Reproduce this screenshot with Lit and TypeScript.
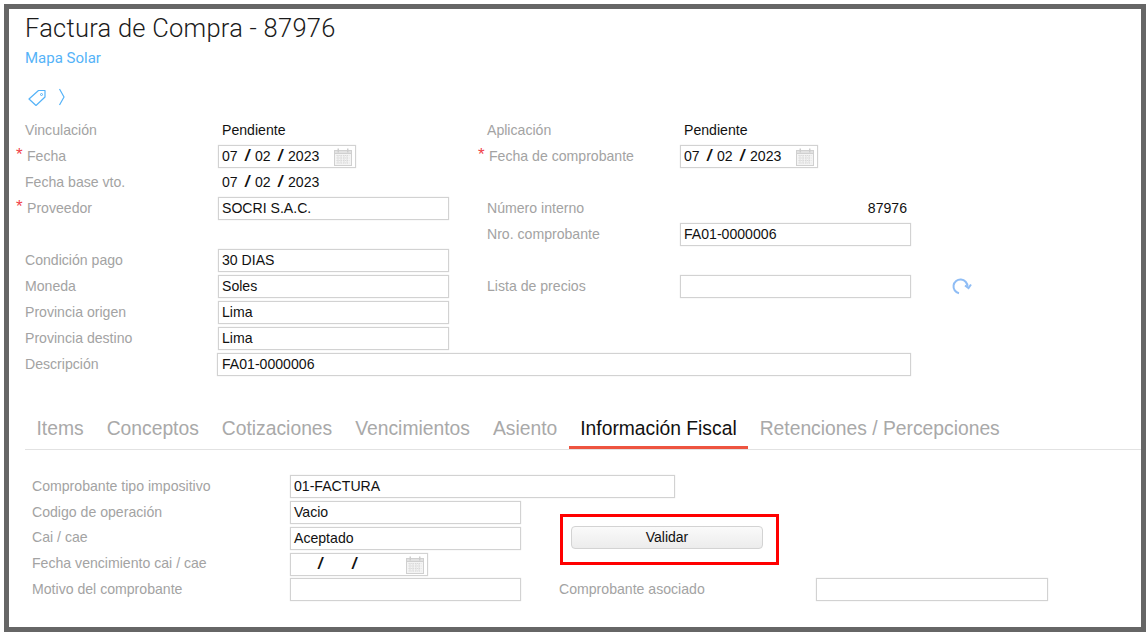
import { LitElement, html, css, svg } from "lit";
import { customElement } from "lit/decorators.js";

const calendar = html`<svg class="cal" width="18" height="18" viewBox="0 0 18 18" fill="none">
  <rect x="0.5" y="2.5" width="17" height="15" fill="#f4f4f4" stroke="#d0d0d0"/>
  <rect x="0.5" y="2.5" width="17" height="3" fill="#e2e2e2" stroke="#d0d0d0"/>
  <rect x="3.5" y="0.5" width="1.5" height="4" fill="#cdcdcd"/><rect x="13" y="0.5" width="1.5" height="4" fill="#cdcdcd"/>
  ${[7.5, 10, 12.5, 15].map((y) => svg`<path d="M2.5 ${y}H15.5" stroke="#d9d9d9" stroke-width="1" stroke-dasharray="1.2 .9"/>`)}
  ${[4, 7, 10, 13].map((x) => svg`<path d="M${x} 7V15.5" stroke="#d9d9d9" stroke-width=".8"/>`)}
</svg>`;

const dateText = (d = "07", m = "02", y = "2023") => html`<span class="dp">${d}</span><i class="sl">/</i><span class="dp">${m}</span><i class="sl">/</i><span>${y}</span>`;

@customElement("app-root")
export class AppRoot extends LitElement {
  static styles = css`
    :host { display: block; width: 1147px; height: 635px; box-sizing: border-box; padding: 4px 1px 3px 4px; background: #fff; font-family: "Liberation Sans", Arial, sans-serif; overflow: hidden; }
    .frame { height: 100%; box-sizing: border-box; border: 5px solid #666; background: #fff; padding: 4px 0 0 16px; overflow: hidden; }
    h1 { margin: 0; font: 300 25.5px/30px Roboto, sans-serif; color: #1b1b1b; letter-spacing: 0.25px; }
    .link { margin-top: 5px; font: 400 15px/20px Roboto, sans-serif; color: #55b3f8; }
    .tools { display: flex; align-items: center; gap: 11px; height: 22px; margin: 18px 0 9px 2px; }
    .form { display: grid; grid-template-columns: 193px 269px 193px 231px 70px; grid-auto-rows: 26px; align-items: center; font-size: 14px; color: #111; }
    .lab { color: #a3a3a3; white-space: nowrap; position: relative; font-size: 14.1px; }
    .req { padding-left: 2px; }
    .req::before { content: "*"; position: absolute; left: -9px; top: -3px; color: #f0414a; font-size: 17px; line-height: 20px; }
    .val { padding-left: 4px; white-space: nowrap; font-size: 14.1px; }
    .box { box-sizing: border-box; height: 23px; border: 1px solid #d2d2d2; box-shadow: 0 0 1px rgba(0, 0, 0, 0.15); padding: 0 3px; line-height: 21px; display: flex; align-items: center; white-space: nowrap; background: #fff; color: #111; font-size: 14.1px; }
    .w231 { width: 231px; }
    .w232 { width: 232px; }
    .date { width: 138px; position: relative; }
    .plain { display: flex; align-items: center; }
    .dp { display: inline-block; width: 17px; }
    .sl { display: inline-block; width: 16px; padding-left: 6px; box-sizing: border-box; font-style: italic; font-size: 16px; font-weight: 700; line-height: 16px; }
    .blank { display: inline-block; width: 18px; }
    .cal { position: absolute; right: 3px; top: 2px; }
    .wide { grid-column: 2 / 5; width: 694px; margin-left: -1px; padding-left: 4px; }
    .right { text-align: right; padding-right: 4px; }
    .refresh { padding-left: 39px; display: flex; }
    .refresh svg { flex: none; }
    .tabs { display: flex; margin: 34px 0 0 0; width: 1116px; height: 38px; border-bottom: 1px solid #e2e2e2; box-sizing: content-box; }
    .tab { padding: 0 11.5px; font-size: 19.3px; line-height: 36px; color: #a9a9a9; box-sizing: border-box; height: 38px; white-space: nowrap; }
    .tab.on { color: #111; border-bottom: 3px solid #ee5440; }
    .lower { display: grid; grid-template-columns: 258px 269px 257px 232px; grid-auto-rows: 25.75px; align-items: center; margin: 23px 0 0 7px; font-size: 14px; }
    .f { padding-top: 2px; }
    .c2 { grid-column: 2 / 4; }
    .w385 { width: 385px; }
    .btnwrap { position: relative; margin-left: 12px; width: 192px; height: 23px; }
    button { width: 100%; height: 100%; box-sizing: border-box; border: 1px solid #d3d3d3; border-radius: 4px; background: linear-gradient(#fafafa, #ececec); font: 14px "Liberation Sans", Arial, sans-serif; color: #111; padding: 0; display: block; }
    .mark { position: absolute; left: -11px; top: -12px; width: 219px; height: 51px; box-sizing: border-box; border: 3px solid #f00; pointer-events: none; }
  `;

  render() {
    return html`<div class="frame">
      <h1>Factura de Compra - 87976</h1>
      <div class="link">Mapa Solar</div>
      <div class="tools">
        <svg width="20" height="18" viewBox="0 0 20 18" fill="none" stroke="#55b3f8" stroke-width="1.2" stroke-linejoin="round"><path d="M2 11 11.5 2.5H18V9L9 17.5Z"/><circle cx="14.5" cy="6.5" r="1" stroke-width="1"/></svg>
        <svg width="8" height="18" viewBox="0 0 8 18" fill="none" stroke="#55b3f8" stroke-width="1.2"><path d="M1.5 1 6 9 1.5 17"/></svg>
      </div>
      <div class="form">
        <div class="lab">Vinculación</div><div class="val">Pendiente</div><div class="lab">Aplicación</div><div class="val">Pendiente</div><div></div>
        <div class="lab req">Fecha</div><div class="box date">${dateText()}${calendar}</div><div class="lab req">Fecha de comprobante</div><div class="box date">${dateText()}${calendar}</div><div></div>
        <div class="lab">Fecha base vto.</div><div class="val plain">${dateText()}</div><div></div><div></div><div></div>
        <div class="lab req">Proveedor</div><div class="box w231">SOCRI S.A.C.</div><div class="lab">Número interno</div><div class="val right">87976</div><div></div>
        <div></div><div></div><div class="lab">Nro. comprobante</div><div class="box w231">FA01-0000006</div><div></div>
        <div class="lab">Condición pago</div><div class="box w231">30 DIAS</div><div></div><div></div><div></div>
        <div class="lab">Moneda</div><div class="box w231">Soles</div><div class="lab">Lista de precios</div><div class="box w231"></div>
        <div class="refresh"><svg width="23" height="18" viewBox="0 0 23 18" fill="none" stroke="#8fbdf5" stroke-width="2"><path d="M9 16.3A7 7 0 1 1 17.5 9.5"/><path d="M21 7.5 18.5 11 15 8.5"/></svg></div>
        <div class="lab">Provincia origen</div><div class="box w231">Lima</div><div></div><div></div><div></div>
        <div class="lab">Provincia destino</div><div class="box w231">Lima</div><div></div><div></div><div></div>
        <div class="lab">Descripción</div><div class="box wide">FA01-0000006</div><div></div>
      </div>
      <div class="tabs">
        ${["Items", "Conceptos", "Cotizaciones", "Vencimientos", "Asiento", "Información Fiscal", "Retenciones / Percepciones"].map(
          (t) => html`<div class="tab ${t === "Información Fiscal" ? "on" : ""}">${t}</div>`
        )}
      </div>
      <div class="lower">
        <div class="lab">Comprobante tipo impositivo</div><div class="c2 f"><div class="box w385">01-FACTURA</div></div><div></div>
        <div class="lab">Codigo de operación</div><div class="f"><div class="box w231">Vacio</div></div><div></div><div></div>
        <div class="lab">Cai / cae</div><div class="f"><div class="box w231">Aceptado</div></div><div><div class="btnwrap"><button>Validar</button><div class="mark"></div></div></div><div></div>
        <div class="lab">Fecha vencimiento cai / cae</div><div class="f"><div class="box date"><span class="blank"></span><i class="sl">/</i><span class="blank"></span><i class="sl">/</i>${calendar}</div></div><div></div><div></div>
        <div class="lab">Motivo del comprobante</div><div class="f"><div class="box w231"></div></div><div class="lab">Comprobante asociado</div><div class="f"><div class="box w232"></div></div>
      </div>
    </div>`;
  }
}
